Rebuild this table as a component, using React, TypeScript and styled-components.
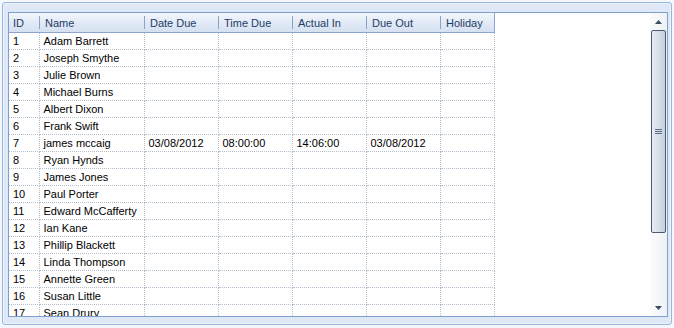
import React from "react";
import styled, { createGlobalStyle } from "styled-components";

type Booking = {
  id: number;
  name: string;
  dateDue?: string;
  timeDue?: string;
  actualIn?: string;
  dueOut?: string;
  holiday?: string;
};

const bookings: Booking[] = [
  { id: 1, name: "Adam Barrett" },
  { id: 2, name: "Joseph Smythe" },
  { id: 3, name: "Julie Brown" },
  { id: 4, name: "Michael Burns" },
  { id: 5, name: "Albert Dixon" },
  { id: 6, name: "Frank Swift" },
  {
    id: 7,
    name: "james mccaig",
    dateDue: "03/08/2012",
    timeDue: "08:00:00",
    actualIn: "14:06:00",
    dueOut: "03/08/2012",
  },
  { id: 8, name: "Ryan Hynds" },
  { id: 9, name: "James Jones" },
  { id: 10, name: "Paul Porter" },
  { id: 11, name: "Edward McCafferty" },
  { id: 12, name: "Ian Kane" },
  { id: 13, name: "Phillip Blackett" },
  { id: 14, name: "Linda Thompson" },
  { id: 15, name: "Annette Green" },
  { id: 16, name: "Susan Little" },
  { id: 17, name: "Sean Drury" },
  { id: 18, name: "Mark Doyle" },
];

const columns = [
  { key: "id", label: "ID", width: 30 },
  { key: "name", label: "Name", width: 105 },
  { key: "dateDue", label: "Date Due", width: 74 },
  { key: "timeDue", label: "Time Due", width: 74 },
  { key: "actualIn", label: "Actual In", width: 74 },
  { key: "dueOut", label: "Due Out", width: 74 },
  { key: "holiday", label: "Holiday", width: 54 },
] as const;

const App = () => {
  return (
    <>
      <GlobalStyle />
      <Frame>
        <Panel>
          <GridArea>
            <Table>
              <colgroup>
                {columns.map((c) => (
                  <col key={c.key} style={{ width: c.width }} />
                ))}
              </colgroup>
              <thead>
                <tr>
                  {columns.map((c, i) => (
                    <HeaderCell key={c.key} $first={i === 0}>
                      {c.label}
                    </HeaderCell>
                  ))}
                </tr>
              </thead>
              <tbody>
                {bookings.map((b) => (
                  <tr key={b.id}>
                    {columns.map((c) => (
                      <Cell key={c.key}>{b[c.key] ?? ""}</Cell>
                    ))}
                  </tr>
                ))}
              </tbody>
            </Table>
          </GridArea>
          <ScrollBar>
            <ArrowButton>
              <svg width="7" height="4" viewBox="0 0 7 4">
                <path d="M0 4 L3.5 0 L7 4 Z" fill="#3b4b5e" />
              </svg>
            </ArrowButton>
            <Track>
              <Thumb>
                <Grip />
                <Grip />
                <Grip />
              </Thumb>
            </Track>
            <ArrowButton>
              <svg width="7" height="4" viewBox="0 0 7 4">
                <path d="M0 0 L7 0 L3.5 4 Z" fill="#3b4b5e" />
              </svg>
            </ArrowButton>
          </ScrollBar>
        </Panel>
      </Frame>
    </>
  );
};

const GlobalStyle = createGlobalStyle`
  html, body {
    margin: 0;
    padding: 0;
    background: #f4f7fb;
  }
  body {
    font-family: "Liberation Sans", Arial, sans-serif;
    font-size: 11px;
  }
`;

const Frame = styled.div`
  box-sizing: border-box;
  width: 670px;
  height: 323px;
  margin: 2px 0 0 2px;
  padding: 9px 3px 6px 5px;
  background: #dfe8f6;
  border: 1px solid #99b6df;
  border-radius: 3px;
  box-shadow: inset 0 0 0 1px #eef3fa;
`;

const Panel = styled.div`
  box-sizing: border-box;
  display: flex;
  height: 305px;
  background: #ffffff;
  border: 1px solid #7f9fcd;
  overflow: hidden;
`;

const GridArea = styled.div`
  flex: 1;
  overflow: hidden;
`;

const Table = styled.table`
  border-collapse: collapse;
  table-layout: fixed;
  width: 485px;
  color: #000000;
`;

const HeaderCell = styled.th<{ $first?: boolean }>`
  position: relative;
  height: 19px;
  padding: 0 0 0 ${(p) => (p.$first ? "4px" : "6px")};
  text-align: left;
  font-weight: normal;
  color: #1e3c66;
  white-space: nowrap;
  background: linear-gradient(#f3f7fc, #e2eaf6 50%, #d5e0f0);
  border-bottom: 1px solid #8da5ce;
  &:last-child {
    border-right: 1px solid #8da5ce;
  }
  &::before {
    content: "";
    display: ${(p) => (p.$first ? "none" : "block")};
    position: absolute;
    left: 0;
    top: 3px;
    bottom: 3px;
    border-left: 1px solid #8aa2c8;
  }
`;

const Cell = styled.td`
  height: 16px;
  padding: 0 0 0 4px;
  white-space: nowrap;
  overflow: hidden;
  border-right: 1px dotted #b4bfce;
  border-bottom: 1px dotted #b4bfce;
  line-height: 16px;
`;

const ScrollBar = styled.div`
  display: flex;
  flex-direction: column;
  width: 17px;
  background: linear-gradient(90deg, #fbfcfd, #eef1f5);
`;

const ArrowButton = styled.div`
  display: flex;
  align-items: center;
  justify-content: center;
  height: 17px;
`;

const Track = styled.div`
  flex: 1;
  display: flex;
  flex-direction: column;
`;

const Thumb = styled.div`
  box-sizing: border-box;
  display: flex;
  flex-direction: column;
  align-items: center;
  justify-content: center;
  gap: 1px;
  height: 203px;
  margin: 0 1px;
  border: 1px solid #4b5a6e;
  border-radius: 2px;
  background: linear-gradient(90deg, #e6ecf3, #d3dce7 60%, #c6d1de);
`;

const Grip = styled.div`
  width: 7px;
  height: 1px;
  background: #5a6a7f;
`;

export default App;
